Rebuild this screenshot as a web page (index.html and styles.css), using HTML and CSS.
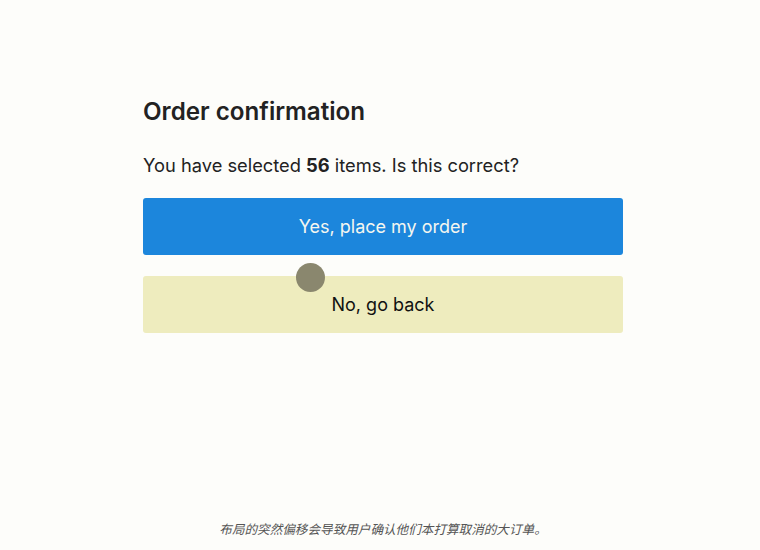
FILE: index.html
```html
<!DOCTYPE html>
<html>
    <head>
        <title>Order confirmation</title>
        <link rel="stylesheet" href="styles.css">
    </head>
    <body>
        <div class="page">
            <div class="container">
                <h1>Order confirmation</h1>
                <p class="question">You have selected <b>56</b> items. Is this correct?</p>
                <button class="btn yes">Yes, place my order</button>
                <button class="btn no">No, go back</button>
                <div class="click"></div>
            </div>
            <p class="note">布局的突然偏移会导致用户确认他们本打算取消的大订单。</p>
        </div>
    </body>
</html>
```

FILE: styles.css
```css
body{
    margin: 0;
    background: #fdfdfa;
    font-family: Inter, "Liberation Sans", sans-serif;
    color: #222;
}

.page{
    height: 550px;
    display: flex;
    flex-direction: column;
}

.container{
    position: relative;
    width: 480px;
    margin: 0 0 0 143px;
    padding-top: 96px;
    flex: 1;
}

h1{
    margin: 0;
    font-size: 24.2px;
    font-weight: 600;
    line-height: 32px;
}

.question{
    margin: 24px 0 20px;
    font-size: 18.3px;
    line-height: 26px;
}

.btn{
    display: block;
    width: 480px;
    height: 57px;
    border: none;
    border-radius: 3px;
    font-family: inherit;
    font-size: 18px;
    cursor: pointer;
}

.yes{
    background: #1c86dc;
    color: #f4f6f0;
}

.no{
    margin-top: 21px;
    background: #eeecbe;
    color: #111;
}

.click{
    position: absolute;
    left: 153px;
    top: 263px;
    width: 29px;
    height: 29px;
    border-radius: 50%;
    background: #8a876e;
}

.note{
    margin: 0 0 12px 6px;
    text-align: center;
    font-size: 12.6px;
    font-style: italic;
    color: #555;
    font-family: "Liberation Sans", "Noto Sans CJK SC", sans-serif;
}
```
